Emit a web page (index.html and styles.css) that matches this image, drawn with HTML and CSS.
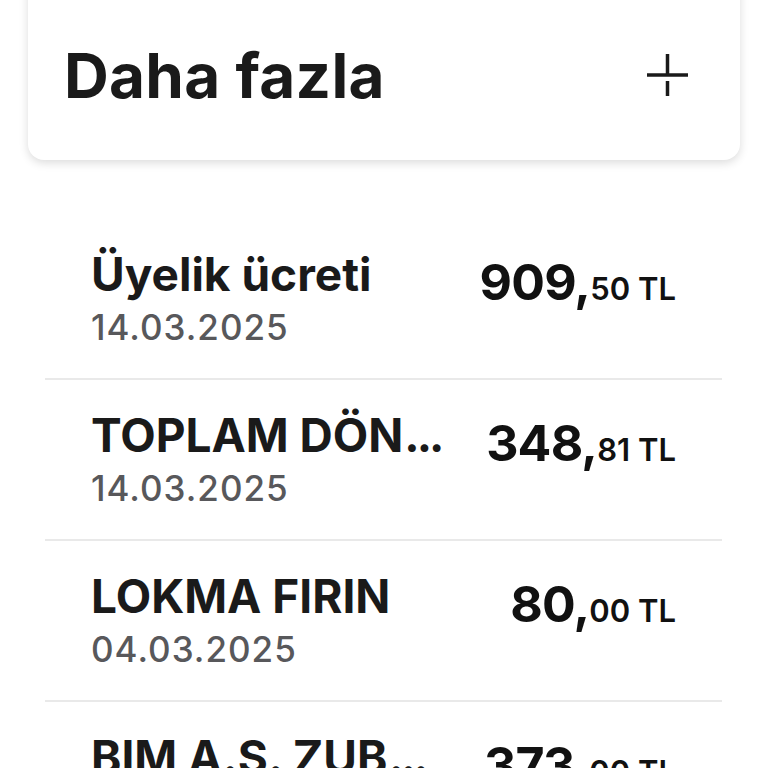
FILE: index.html
```html
<!DOCTYPE html>
<html lang="tr">
<head>
    <meta charset="UTF-8">
    <meta name="viewport" content="width=device-width, initial-scale=1.0">
    <title>Hesap hareketleri</title>
    <link rel="stylesheet" href="styles.css">
</head>
<body>

<div class="card">
    <div class="card-head">
        <h2>Daha fazla</h2>
        <svg class="plus" width="44" height="46" viewBox="0 0 44 46">
            <line x1="1" y1="22" x2="42" y2="22" />
            <line x1="21.5" y1="1" x2="21.5" y2="22" />
            <line x1="21.5" y1="28" x2="21.5" y2="43" />
        </svg>
    </div>
</div>

<ul class="list">
    <li class="row">
        <div class="info">
            <div class="title">Üyelik ücreti</div>
            <div class="date">14.03.2025</div>
        </div>
        <div class="amount">909,<span class="cents">50 TL</span></div>
    </li>
    <li class="row">
        <div class="info">
            <div class="title">TOPLAM DÖN<span class="dots">...</span></div>
            <div class="date">14.03.2025</div>
        </div>
        <div class="amount">348,<span class="cents">81 TL</span></div>
    </li>
    <li class="row">
        <div class="info">
            <div class="title">LOKMA FIRIN</div>
            <div class="date">04.03.2025</div>
        </div>
        <div class="amount">80,<span class="cents">00 TL</span></div>
    </li>
    <li class="row">
        <div class="info">
            <div class="title">BIM A.S. ZUB<span class="dots">...</span></div>
            <div class="date">03.03.2025</div>
        </div>
        <div class="amount">373,<span class="cents">00 TL</span></div>
    </li>
</ul>

</body>
</html>
```

FILE: styles.css
```css
body {
    font-family: Inter, "Liberation Sans", sans-serif;
    margin: 0;
    padding: 0;
    background-color: #fff;
    color: #1a1a1a;
    overflow: hidden;
}
.card {
    margin: -24px 28px 0;
    padding: 56px 50px 40px 36px;
    background-color: #fff;
    border-radius: 16px;
    box-shadow: 0 3px 10px rgba(0, 0, 0, 0.14);
}
.card-head {
    display: flex;
    align-items: center;
    justify-content: space-between;
    height: 88px;
}
.card-head h2 {
    margin: 0;
    font-size: 62px;
    line-height: 88px;
    font-weight: 700;
    letter-spacing: 0.3px;
}
.plus line {
    stroke: #1a1a1a;
    stroke-width: 3.5;
}
.list {
    list-style: none;
    margin: 59px 46px 0 45px;
    padding: 0;
}
.row {
    display: flex;
    justify-content: space-between;
    align-items: flex-start;
    padding: 29px 46px 29px 46px;
    border-bottom: 2px solid #e9e9e9;
}
.title {
    font-size: 46px;
    line-height: 52px;
    font-weight: 700;
    white-space: nowrap;
}
.dots {
    margin-left: 1px;
    letter-spacing: -3px;
}
.date {
    margin-top: 5px;
    font-size: 35px;
    line-height: 44px;
    font-weight: 500;
    letter-spacing: 1px;
    color: #58585b;
}
.amount {
    font-size: 50px;
    line-height: 68px;
    font-weight: 700;
    letter-spacing: -0.8px;
    color: #111;
    white-space: nowrap;
}
.cents {
    font-size: 31px;
    font-weight: 600;
    letter-spacing: 0;
}
```
